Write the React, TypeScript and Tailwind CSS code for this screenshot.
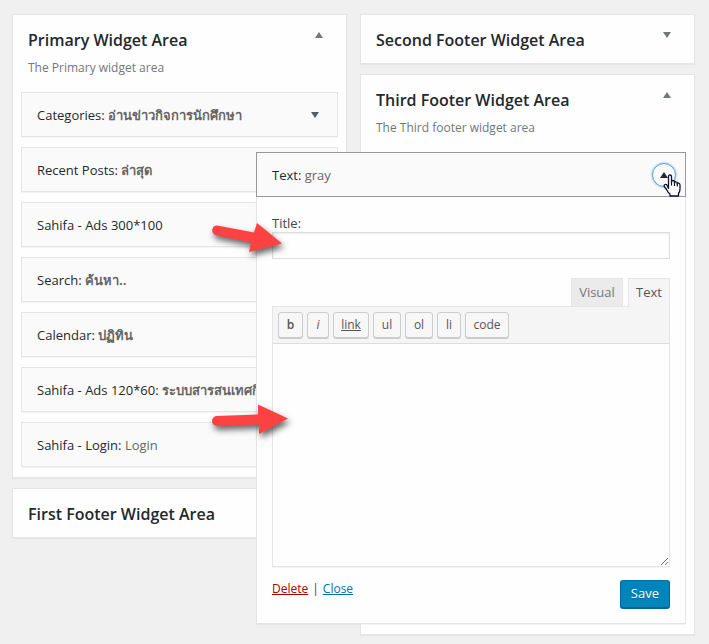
import type { ReactNode } from 'react';
import clsx from 'clsx';

type Widget = { name: string; title?: string; thai?: boolean };

const PRIMARY_WIDGETS: Widget[] = [
  { name: 'Categories', title: 'อ่านข่าวกิจการนักศึกษา', thai: true },
  { name: 'Recent Posts', title: 'ล่าสุด', thai: true },
  { name: 'Sahifa - Ads 300*100' },
  { name: 'Search', title: 'ค้นหา..', thai: true },
  { name: 'Calendar', title: 'ปฏิทิน', thai: true },
  { name: 'Sahifa - Ads 120*60', title: 'ระบบสารสนเทศกิจการ', thai: true },
  { name: 'Sahifa - Login', title: 'Login' },
];

const QUICKTAGS = [
  { label: 'b', className: 'w-[25px] font-semibold' },
  { label: 'i', className: 'w-[22px] italic' },
  { label: 'link', className: 'w-9 underline' },
  { label: 'ul', className: 'w-7' },
  { label: 'ol', className: 'w-7' },
  { label: 'li', className: 'w-6' },
  { label: 'code', className: 'w-11' },
];

function Triangle({ up = false }: { up?: boolean }) {
  return (
    <svg width="8" height="6" viewBox="0 0 8 6" fill="currentColor" aria-hidden="true">
      <path d={up ? 'M4 0 8 6H0Z' : 'M0 0H8L4 6Z'} />
    </svg>
  );
}

type AreaProps = { title: string; description?: string; open?: boolean; children?: ReactNode };

function WidgetArea({ title, description, open = false, children }: AreaProps) {
  return (
    <section className="border border-[#e5e5e5] bg-[#fefefe] px-2 shadow-[0_1px_1px_rgba(0,0,0,0.04)]">
      <div className="flex items-start justify-between pr-[7px] pl-[7px]">
        <h2 className="pt-[13px] pb-[11px] text-base leading-6 font-semibold whitespace-nowrap text-[#23282d]">{title}</h2>
        <button
          type="button"
          aria-label={`Toggle ${title}`}
          aria-expanded={open}
          className="flex h-10 w-6 items-center justify-center text-[#72777c]"
        >
          <Triangle up={open} />
        </button>
      </div>
      {description && <p className="-mt-[5px] pb-3.5 pl-[7px] text-xs leading-5 text-[#72777c]">{description}</p>}
      {children && <div className="flex flex-col gap-2.5 pb-2.5">{children}</div>}
    </section>
  );
}

function WidgetTitle({ name, title, thai = false }: Widget) {
  return (
    <h3 className="min-w-0 truncate leading-6 font-medium text-[#23282d]">
      {title ? `${name}:` : name}
      {title && (
        <span lang={thai ? 'th' : undefined} className={clsx('text-[#666]', thai ? 'font-bold' : 'font-normal')}>
          {' '}
          {title}
        </span>
      )}
    </h3>
  );
}

function WidgetRow(widget: Widget) {
  return (
    <div className="flex h-[45px] items-center justify-between border border-[#e5e5e5] bg-[#fafafa] pr-2.5 pl-[15px] shadow-[0_1px_1px_rgba(0,0,0,0.04)]">
      <WidgetTitle {...widget} />
      <button type="button" aria-label={`Edit ${widget.name}`} className="flex size-6 shrink-0 items-center justify-center text-[#555d66]">
        <Triangle />
      </button>
    </div>
  );
}

function HandCursor() {
  return (
    <svg className="absolute top-[11px] left-[11px] z-10" width="18" height="23" viewBox="0 0 18 23" aria-hidden="true">
      <path
        d="M5.5 14.5V2.5Q5.5 1 7 1T8.500 2.500V8Q8.500 6.500 10 6.500T11.500 8V9Q11.500 7.500 13 7.800T14.300 9.300V10Q14.500 9 15.600 9.200T17 10.800V15Q17 17.500 15.500 19.500V22H7V20Q5 18.500 3.500 15.500L1.300 12.500Q.7 11 2 10.500T4.200 11.500Z"
        fill="#fff"
        stroke="#10142a"
        strokeWidth="1.300"
        strokeLinejoin="round"
      />
      <path d="M8.500 7.500V11.500M11.500 8.500V12M14.300 9.500V12.500" stroke="#10142a" strokeWidth="1.200" />
    </svg>
  );
}

function TextWidgetForm() {
  return (
    <form className="border border-t-0 border-[#e5e5e5] bg-[#fefefe] px-[15px] pt-[17px] pb-[15px] shadow-[0_1px_1px_rgba(0,0,0,0.04)]">
      <label htmlFor="widget-title" className="block leading-[18px]">
        Title:
      </label>
      <input
        id="widget-title"
        type="text"
        className="block h-[27px] w-full border border-[#ddd] bg-[#fefefe] px-1.5 shadow-[inset_0_1px_2px_rgba(0,0,0,0.07)] outline-none"
      />

      <div className="mt-[19px] flex justify-end gap-[5px]">
        <button type="button" className="h-7 w-[52px] border border-b-0 border-[#e5e5e5] bg-[#ebebeb] text-[#777]">
          Visual
        </button>
        <button type="button" className="relative -mb-px h-[29px] w-[42px] border border-b-0 border-[#e5e5e5] bg-[#f5f5f5] text-[#555]">
          Text
        </button>
      </div>
      <div className="border border-[#e5e5e5] shadow-[0_1px_1px_rgba(0,0,0,0.04)]">
        <div className="flex gap-1 border-b border-[#ddd] bg-[#f5f5f5] px-[5px] py-[5px]">
          {QUICKTAGS.map(({ label, className }) => (
            <button
              key={label}
              type="button"
              className={clsx(
                'h-[26px] rounded-[3px] border border-[#ccc] bg-[#f7f7f7] text-center text-xs leading-5 text-[#555] shadow-[0_1px_0_#ccc]',
                className,
              )}
            >
              {label}
            </button>
          ))}
        </div>
        <textarea aria-label="Content" className="block h-[222px] w-full resize-y bg-[#fefefe] p-2.5 outline-none" />
      </div>

      <div className="mt-[13px] flex items-start justify-between">
        <div className="flex gap-1 text-xs leading-[18px]">
          <a href="#delete" className="text-[#a00] underline">Delete</a>
          <span>|</span>
          <a href="#close" className="text-[#0073aa] underline">Close</a>
        </div>
        <button
          type="submit"
          className="h-7 rounded-[3px] border border-[#006799] border-t-[#0073aa] bg-[#0085ba] px-2.5 font-medium text-white shadow-[0_1px_0_#006799] [text-shadow:0_1px_1px_#006799]"
        >
          Save
        </button>
      </div>
    </form>
  );
}

function OpenTextWidget() {
  return (
    <div className="relative z-10 -ml-[113px]">
      <div className="flex h-[45px] items-center justify-between border border-[#999] bg-[#fafafa] pr-[9px] pl-[15px]">
        <WidgetTitle name="Text" title="gray" />
        <div className="relative">
          <button
            type="button"
            aria-label="Edit Text"
            aria-expanded
            className="flex size-6 items-center justify-center rounded-full border border-[#5b9dd9] text-[#23282d] shadow-[0_0_2px_rgba(30,140,190,0.8)]"
          >
            <Triangle up />
          </button>
          <HandCursor />
        </div>
      </div>
      <TextWidgetForm />
    </div>
  );
}

// Red callout pointing right; `d` is the whole outline, shaft and head.
function Callout({ d, className }: { d: string; className: string }) {
  return (
    <svg className={clsx('pointer-events-none absolute z-20 overflow-visible', className)} width="80" height="40" viewBox="0 0 80 40" aria-hidden="true">
      <path d={d} fill="#fe4242" className="drop-shadow-[2px_4px_3px_rgba(0,0,0,0.6)]" />
    </svg>
  );
}

export default function App() {
  return (
    <main className="relative min-h-screen bg-[#f0f0f0] pt-3.5 pr-3.5 pb-2 pl-3 font-['Open_Sans','Noto_Sans',sans-serif] text-[13px] text-[#444]">
      <div className="grid grid-cols-2 items-start gap-[13px]">
        <div className="flex min-w-0 flex-col gap-2.5">
          <WidgetArea title="Primary Widget Area" description="The Primary widget area" open>
            {PRIMARY_WIDGETS.map((widget) => (
              <WidgetRow key={widget.name} {...widget} />
            ))}
          </WidgetArea>
          <WidgetArea title="First Footer Widget Area" />
        </div>
        <div className="flex min-w-0 flex-col gap-2.5">
          <WidgetArea title="Second Footer Widget Area" />
          <WidgetArea title="Third Footer Widget Area" description="The Third footer widget area" open>
            <OpenTextWidget />
          </WidgetArea>
        </div>
      </div>

      <Callout className="top-[220px] left-[208px]" d="M9 5.500 46 12.500 49 3 74 23.500 41 32 43 22.500 7 15A5 5 0 0 1 9 5.500Z" />
      <Callout className="top-[400px] left-[208px]" d="M9 16 50 14.500V4.500L80 18.500 51 34V24.500L9 26A5 5 0 0 1 9 16Z" />
    </main>
  );
}
